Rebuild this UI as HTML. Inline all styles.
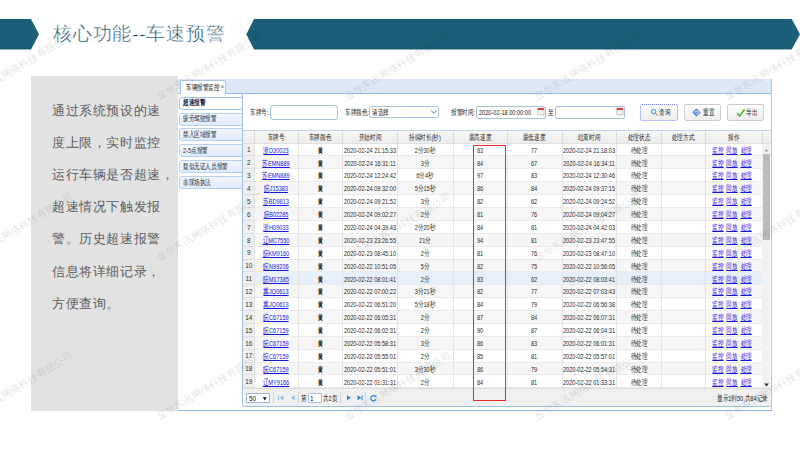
<!DOCTYPE html><html><head><meta charset="utf-8"><style>
*{margin:0;padding:0;box-sizing:border-box}
html,body{width:800px;height:450px;overflow:hidden;background:#fff}
body{position:relative;font-family:"Liberation Sans",sans-serif}
.a{position:absolute}
.t{position:absolute;white-space:nowrap;line-height:1}
.s{position:absolute;white-space:nowrap;font-size:7.5px;line-height:8px;height:8px;color:#2a2a2a;transform:scaleX(.7);transform-origin:0 0}
.s.c{text-align:center;transform-origin:50% 0}
.s b{font-weight:normal;font-size:8px}
.title{left:53px;top:25px;font-family:"Liberation Serif",serif;font-size:18.6px;letter-spacing:0.8px;color:#174f68;-webkit-text-stroke:0.4px #fff}
.gray{left:31px;top:76px;width:146.5px;height:335px;background:#e2e2e2}
.para{left:52px;font-family:"Liberation Serif",serif;font-size:12.5px;color:#5e5e5e;letter-spacing:0.6px;}
.ss{left:177.5px;top:79px;width:594px;height:331.5px;background:#fff}
.tabstrip{left:177.5px;top:79px;width:594px;height:15px;background:#dde8f8;border-bottom:1px solid #99bce8}
.tab{left:179.7px;top:80.3px;width:46px;height:13.7px;background:linear-gradient(#fff,#f7fafe);border:1px solid #a9c6ea;border-bottom:none;border-radius:2px 2px 0 0}
.menu{left:179px;width:64px;height:13px;border:1px solid #b9d0ee;border-radius:3px 0 0 3px;background:linear-gradient(#f3f7fd,#e0eaf8)}
.menu.sel{background:#fff;border-color:#9fc0ea}
.panel{left:242px;top:94px;width:529.5px;height:312.5px;border:1px solid #9cbfe8;border-top:none;border-radius:0 0 3px 3px}
.inp{border:1px solid #a9c0de;border-radius:2px;background:#fff}
.btn{border:1px solid #cdcdcd;border-radius:2px;background:linear-gradient(#fefefe,#eeeeee)}
.hd{top:130.4px;height:13.2px;background:linear-gradient(#f6f6f6,#ededed);border-top:1px solid #c3d6ef;border-bottom:1px solid #e0e0e0}
.row{left:243px;width:519.4px;height:12.88px;border-bottom:1px solid #ebebeb}
.vl{width:1px;background:#e4e4e4}
.lnk{color:#1515e0;text-decoration:underline;text-decoration-thickness:0.7px;text-underline-offset:0.5px}
.wm{font-size:10px;color:rgba(40,40,40,0.15);transform-origin:0 100%;transform:rotate(-31deg);letter-spacing:0.2px}
</style></head><body>
<svg class="a" style="left:0;top:0" width="800" height="450" viewBox="0 0 800 450"><polygon points="0,19 31,19 39,34.3 31,49.5 0,49.5" fill="#1a5e77"/><polygon points="246.4,34.3 254,19 791.7,19 800,34.3 791.7,49.5 254,49.5" fill="#1a5e77"/></svg>
<div class="t title">核心功能--车速预警</div>
<div class="a gray"></div>
<div class="t para" style="top:105.00px">通过系统预设的速</div>
<div class="t para" style="top:137.10px">度上限，实时监控</div>
<div class="t para" style="top:169.20px">运行车辆是否超速，</div>
<div class="t para" style="top:201.30px">超速情况下触发报</div>
<div class="t para" style="top:233.40px">警。历史超速报警</div>
<div class="t para" style="top:265.50px">信息将详细记录，</div>
<div class="t para" style="top:297.60px">方便查询。</div>
<div class="a ss"></div>
<div class="a tabstrip"></div>
<div class="a tab"></div>
<div class="s " style="left:186.00px;top:83.50px;color:#1a1a1a">车辆报警监控</div>
<div class="t" style="left:220.5px;top:83.6px;font-size:6.5px;color:#666">×</div>
<div class="a menu sel" style="top:96.60px"></div>
<div class="s " style="left:183.00px;top:99.20px;color:#1b2a44;font-weight:bold">超速报警</div>
<div class="a menu" style="top:112.50px"></div>
<div class="s " style="left:183.00px;top:115.10px;color:#262b33">疲劳驾驶报警</div>
<div class="a menu" style="top:128.40px"></div>
<div class="s " style="left:183.00px;top:131.00px;color:#262b33">禁入区域报警</div>
<div class="a menu" style="top:144.30px"></div>
<div class="s " style="left:183.00px;top:146.90px;color:#262b33"><b>2-5</b>点报警</div>
<div class="a menu" style="top:160.20px"></div>
<div class="s " style="left:183.00px;top:162.80px;color:#262b33">疑似无证人员报警</div>
<div class="a menu" style="top:176.10px"></div>
<div class="s " style="left:183.00px;top:178.70px;color:#262b33">非现场执法</div>
<div class="a panel"></div>
<div class="s " style="left:250.00px;top:108.50px;">车牌号<b>:</b></div>
<div class="a inp" style="left:270.2px;top:105px;width:67.7px;height:14.7px;border-radius:3px"></div>
<div class="s " style="left:344.50px;top:108.50px;">车牌颜色<b>:</b></div>
<div class="a inp" style="left:369.4px;top:106.3px;width:70px;height:12px"></div>
<div class="s " style="left:372.00px;top:108.50px;color:#111">请选择</div>
<svg class="a" style="left:430px;top:109px" width="8" height="6"><path d="M1.2 1.5 L4 4.3 L6.8 1.5" fill="none" stroke="#4a80c4" stroke-width="1"/></svg>
<div class="s " style="left:451.00px;top:108.50px;">报警时间<b>:</b></div>
<div class="a inp" style="left:476px;top:106px;width:70px;height:13px"></div>
<div class="s " style="left:478.50px;top:108.50px;color:#222"><b>2020-02-18 00:00:00</b></div>
<svg class="a" style="left:537px;top:107px" width="8" height="9"><rect x="0.8" y="1" width="6.2" height="7" fill="#f2f2f2" stroke="#b0b0b0" stroke-width="0.6"/><rect x="0.8" y="1" width="6.2" height="2" fill="#d9423a"/></svg>
<div class="s " style="left:548.00px;top:108.50px;color:#111">至</div>
<div class="a inp" style="left:554.5px;top:106px;width:70px;height:13px"></div>
<svg class="a" style="left:616px;top:107px" width="8" height="9"><rect x="0.8" y="1" width="6.2" height="7" fill="#f2f2f2" stroke="#b0b0b0" stroke-width="0.6"/><rect x="0.8" y="1" width="6.2" height="2" fill="#d9423a"/></svg>
<div class="a btn" style="left:640px;top:104.4px;width:38.4px;height:16.4px;border:1px dotted #7d86e8;"></div>
<div class="s " style="left:659.00px;top:109.00px;color:#222">查询</div>
<div class="a btn" style="left:684px;top:104.4px;width:37px;height:16.4px;"></div>
<div class="s " style="left:703.00px;top:109.00px;color:#222">重置</div>
<div class="a btn" style="left:727px;top:104.4px;width:37px;height:16.4px;"></div>
<div class="s " style="left:746.00px;top:109.00px;color:#222">导出</div>
<svg class="a" style="left:650px;top:108px" width="10" height="9"><circle cx="3.6" cy="3.6" r="2.3" fill="#d6e8fa" stroke="#3f86d3" stroke-width="0.9"/><line x1="5.3" y1="5.3" x2="7.6" y2="7.6" stroke="#e39b2d" stroke-width="1.4"/></svg>
<svg class="a" style="left:692px;top:107.8px" width="10" height="10"><path d="M4.5 0.8 L8.2 4.5 L4.5 8.2 L0.8 4.5Z" fill="#5696dc" stroke="#2f62a8" stroke-width="0.6"/><path d="M3 4.5 A1.6 1.6 0 1 1 4.5 6.1" fill="none" stroke="#fff" stroke-width="0.8"/></svg>
<svg class="a" style="left:735.5px;top:107.5px" width="10" height="10"><path d="M1 5.2 L3.6 8 L8.6 1.2" fill="none" stroke="#52b830" stroke-width="1.7"/></svg>
<div class="a hd" style="left:243px;width:527.5px"></div>
<div class="a vl" style="left:254.00px;top:130.4px;height:13.199999999999989px;background:#dadada"></div>
<div class="s c " style="left:176.15px;top:134.00px;width:200px;color:#1e1e1e">车牌号</div>
<div class="a vl" style="left:298.30px;top:130.4px;height:13.199999999999989px;background:#dadada"></div>
<div class="s c " style="left:220.35px;top:134.00px;width:200px;color:#1e1e1e">车牌颜色</div>
<div class="a vl" style="left:342.40px;top:130.4px;height:13.199999999999989px;background:#dadada"></div>
<div class="s c " style="left:269.70px;top:134.00px;width:200px;color:#1e1e1e">开始时间</div>
<div class="a vl" style="left:397.00px;top:130.4px;height:13.199999999999989px;background:#dadada"></div>
<div class="s c " style="left:324.75px;top:134.00px;width:200px;color:#1e1e1e">持续时长<b>(</b>秒<b>)</b></div>
<div class="a vl" style="left:452.50px;top:130.4px;height:13.199999999999989px;background:#dadada"></div>
<div class="s c " style="left:379.75px;top:134.00px;width:200px;color:#1e1e1e">最高速度</div>
<div class="a vl" style="left:507.00px;top:130.4px;height:13.199999999999989px;background:#dadada"></div>
<div class="s c " style="left:434.38px;top:134.00px;width:200px;color:#1e1e1e">最低速度</div>
<div class="a vl" style="left:561.75px;top:130.4px;height:13.199999999999989px;background:#dadada"></div>
<div class="s c " style="left:488.88px;top:134.00px;width:200px;color:#1e1e1e">结束时间</div>
<div class="a vl" style="left:616.00px;top:130.4px;height:13.199999999999989px;background:#dadada"></div>
<div class="s c " style="left:538.50px;top:134.00px;width:200px;color:#1e1e1e">处理状态</div>
<div class="a vl" style="left:661.00px;top:130.4px;height:13.199999999999989px;background:#dadada"></div>
<div class="s c " style="left:583.00px;top:134.00px;width:200px;color:#1e1e1e">处理方式</div>
<div class="a vl" style="left:705.00px;top:130.4px;height:13.199999999999989px;background:#dadada"></div>
<div class="s c " style="left:633.70px;top:134.00px;width:200px;color:#1e1e1e">操作</div>
<div class="a vl" style="left:762.4px;top:130.4px;height:13.199999999999989px;background:#dadada"></div>
<div class="a row" style="top:143.60px;background:#fff"></div>
<div class="a row" style="top:156.48px;background:#f6f6f6"></div>
<div class="a row" style="top:169.36px;background:#fff"></div>
<div class="a row" style="top:182.24px;background:#f6f6f6"></div>
<div class="a row" style="top:195.12px;background:#fff"></div>
<div class="a row" style="top:208.00px;background:#f6f6f6"></div>
<div class="a row" style="top:220.88px;background:#fff"></div>
<div class="a row" style="top:233.76px;background:#f6f6f6"></div>
<div class="a row" style="top:246.64px;background:#fff"></div>
<div class="a row" style="top:259.52px;background:#f6f6f6"></div>
<div class="a row" style="top:272.40px;background:#e7effb"></div>
<div class="a row" style="top:285.28px;background:#f6f6f6"></div>
<div class="a row" style="top:298.16px;background:#fff"></div>
<div class="a row" style="top:311.04px;background:#f6f6f6"></div>
<div class="a row" style="top:323.92px;background:#fff"></div>
<div class="a row" style="top:336.80px;background:#f6f6f6"></div>
<div class="a row" style="top:349.68px;background:#fff"></div>
<div class="a row" style="top:362.56px;background:#f6f6f6"></div>
<div class="a row" style="top:375.44px;background:#fff"></div>
<div class="a" style="left:243px;top:143.6px;width:11px;height:244.72px;background:#efefef"></div>
<div class="a" style="left:243px;top:155.48px;width:11.5px;height:1px;background:#e0e0e0"></div>
<div class="a" style="left:243px;top:168.36px;width:11.5px;height:1px;background:#e0e0e0"></div>
<div class="a" style="left:243px;top:181.24px;width:11.5px;height:1px;background:#e0e0e0"></div>
<div class="a" style="left:243px;top:194.12px;width:11.5px;height:1px;background:#e0e0e0"></div>
<div class="a" style="left:243px;top:207.00px;width:11.5px;height:1px;background:#e0e0e0"></div>
<div class="a" style="left:243px;top:219.88px;width:11.5px;height:1px;background:#e0e0e0"></div>
<div class="a" style="left:243px;top:232.76px;width:11.5px;height:1px;background:#e0e0e0"></div>
<div class="a" style="left:243px;top:245.64px;width:11.5px;height:1px;background:#e0e0e0"></div>
<div class="a" style="left:243px;top:258.52px;width:11.5px;height:1px;background:#e0e0e0"></div>
<div class="a" style="left:243px;top:271.40px;width:11.5px;height:1px;background:#e0e0e0"></div>
<div class="a" style="left:243px;top:284.28px;width:11.5px;height:1px;background:#e0e0e0"></div>
<div class="a" style="left:243px;top:297.16px;width:11.5px;height:1px;background:#e0e0e0"></div>
<div class="a" style="left:243px;top:310.04px;width:11.5px;height:1px;background:#e0e0e0"></div>
<div class="a" style="left:243px;top:322.92px;width:11.5px;height:1px;background:#e0e0e0"></div>
<div class="a" style="left:243px;top:335.80px;width:11.5px;height:1px;background:#e0e0e0"></div>
<div class="a" style="left:243px;top:348.68px;width:11.5px;height:1px;background:#e0e0e0"></div>
<div class="a" style="left:243px;top:361.56px;width:11.5px;height:1px;background:#e0e0e0"></div>
<div class="a" style="left:243px;top:374.44px;width:11.5px;height:1px;background:#e0e0e0"></div>
<div class="a" style="left:243px;top:387.32px;width:11.5px;height:1px;background:#e0e0e0"></div>
<div class="a vl" style="left:254.00px;top:143.6px;height:244.72px"></div>
<div class="a vl" style="left:298.30px;top:143.6px;height:244.72px"></div>
<div class="a vl" style="left:342.40px;top:143.6px;height:244.72px"></div>
<div class="a vl" style="left:397.00px;top:143.6px;height:244.72px"></div>
<div class="a vl" style="left:452.50px;top:143.6px;height:244.72px"></div>
<div class="a vl" style="left:507.00px;top:143.6px;height:244.72px"></div>
<div class="a vl" style="left:561.75px;top:143.6px;height:244.72px"></div>
<div class="a vl" style="left:616.00px;top:143.6px;height:244.72px"></div>
<div class="a vl" style="left:661.00px;top:143.6px;height:244.72px"></div>
<div class="a vl" style="left:705.00px;top:143.6px;height:244.72px"></div>
<div class="t" style="left:243.00px;width:11.5px;text-align:center;top:146.40px;font-size:7.6px;color:#333;transform:scaleX(.85)">1</div>
<div class="s c lnk" style="left:176.15px;top:146.70px;width:200px;">浙<b>D30023</b></div>
<div class="s c " style="left:220.35px;top:146.70px;width:200px;color:#2a2a2a;font-size:7px;font-weight:bold">黄</div>
<div class="s c " style="left:269.70px;top:146.70px;width:200px;"><b>2020-02-24 21:15:33</b></div>
<div class="s c " style="left:324.75px;top:146.70px;width:200px;"><b>2</b>分<b>30</b>秒</div>
<div class="s c " style="left:379.75px;top:146.70px;width:200px;"><b>83</b></div>
<div class="s c " style="left:434.38px;top:146.70px;width:200px;"><b>77</b></div>
<div class="s c " style="left:488.88px;top:146.70px;width:200px;"><b>2020-02-24 21:18:03</b></div>
<div class="s c " style="left:538.50px;top:146.70px;width:200px;">待处理</div>
<div class="s c" style="left:632.20px;top:146.70px;width:200px"><span class="lnk">监控</span>&nbsp;&nbsp;<span class="lnk">回放</span>&nbsp;&nbsp;<span class="lnk">处理</span></div>
<div class="t" style="left:243.00px;width:11.5px;text-align:center;top:159.28px;font-size:7.6px;color:#333;transform:scaleX(.85)">2</div>
<div class="s c lnk" style="left:176.15px;top:159.58px;width:200px;">苏<b>EMN889</b></div>
<div class="s c " style="left:220.35px;top:159.58px;width:200px;color:#2a2a2a;font-size:7px;font-weight:bold">黄</div>
<div class="s c " style="left:269.70px;top:159.58px;width:200px;"><b>2020-02-24 16:31:11</b></div>
<div class="s c " style="left:324.75px;top:159.58px;width:200px;"><b>3</b>分</div>
<div class="s c " style="left:379.75px;top:159.58px;width:200px;"><b>84</b></div>
<div class="s c " style="left:434.38px;top:159.58px;width:200px;"><b>67</b></div>
<div class="s c " style="left:488.88px;top:159.58px;width:200px;"><b>2020-02-24 16:34:11</b></div>
<div class="s c " style="left:538.50px;top:159.58px;width:200px;">待处理</div>
<div class="s c" style="left:632.20px;top:159.58px;width:200px"><span class="lnk">监控</span>&nbsp;&nbsp;<span class="lnk">回放</span>&nbsp;&nbsp;<span class="lnk">处理</span></div>
<div class="t" style="left:243.00px;width:11.5px;text-align:center;top:172.16px;font-size:7.6px;color:#333;transform:scaleX(.85)">3</div>
<div class="s c lnk" style="left:176.15px;top:172.46px;width:200px;">苏<b>EMN889</b></div>
<div class="s c " style="left:220.35px;top:172.46px;width:200px;color:#2a2a2a;font-size:7px;font-weight:bold">黄</div>
<div class="s c " style="left:269.70px;top:172.46px;width:200px;"><b>2020-02-24 12:24:42</b></div>
<div class="s c " style="left:324.75px;top:172.46px;width:200px;"><b>6</b>分<b>4</b>秒</div>
<div class="s c " style="left:379.75px;top:172.46px;width:200px;"><b>97</b></div>
<div class="s c " style="left:434.38px;top:172.46px;width:200px;"><b>83</b></div>
<div class="s c " style="left:488.88px;top:172.46px;width:200px;"><b>2020-02-24 12:30:46</b></div>
<div class="s c " style="left:538.50px;top:172.46px;width:200px;">待处理</div>
<div class="s c" style="left:632.20px;top:172.46px;width:200px"><span class="lnk">监控</span>&nbsp;&nbsp;<span class="lnk">回放</span>&nbsp;&nbsp;<span class="lnk">处理</span></div>
<div class="t" style="left:243.00px;width:11.5px;text-align:center;top:185.04px;font-size:7.6px;color:#333;transform:scaleX(.85)">4</div>
<div class="s c lnk" style="left:176.15px;top:185.34px;width:200px;">皖<b>J15383</b></div>
<div class="s c " style="left:220.35px;top:185.34px;width:200px;color:#2a2a2a;font-size:7px;font-weight:bold">黄</div>
<div class="s c " style="left:269.70px;top:185.34px;width:200px;"><b>2020-02-24 09:32:00</b></div>
<div class="s c " style="left:324.75px;top:185.34px;width:200px;"><b>5</b>分<b>15</b>秒</div>
<div class="s c " style="left:379.75px;top:185.34px;width:200px;"><b>86</b></div>
<div class="s c " style="left:434.38px;top:185.34px;width:200px;"><b>84</b></div>
<div class="s c " style="left:488.88px;top:185.34px;width:200px;"><b>2020-02-24 09:37:15</b></div>
<div class="s c " style="left:538.50px;top:185.34px;width:200px;">待处理</div>
<div class="s c" style="left:632.20px;top:185.34px;width:200px"><span class="lnk">监控</span>&nbsp;&nbsp;<span class="lnk">回放</span>&nbsp;&nbsp;<span class="lnk">处理</span></div>
<div class="t" style="left:243.00px;width:11.5px;text-align:center;top:197.92px;font-size:7.6px;color:#333;transform:scaleX(.85)">5</div>
<div class="s c lnk" style="left:176.15px;top:198.22px;width:200px;">苏<b>BD9813</b></div>
<div class="s c " style="left:220.35px;top:198.22px;width:200px;color:#2a2a2a;font-size:7px;font-weight:bold">黄</div>
<div class="s c " style="left:269.70px;top:198.22px;width:200px;"><b>2020-02-24 09:21:52</b></div>
<div class="s c " style="left:324.75px;top:198.22px;width:200px;"><b>3</b>分</div>
<div class="s c " style="left:379.75px;top:198.22px;width:200px;"><b>82</b></div>
<div class="s c " style="left:434.38px;top:198.22px;width:200px;"><b>62</b></div>
<div class="s c " style="left:488.88px;top:198.22px;width:200px;"><b>2020-02-24 09:24:52</b></div>
<div class="s c " style="left:538.50px;top:198.22px;width:200px;">待处理</div>
<div class="s c" style="left:632.20px;top:198.22px;width:200px"><span class="lnk">监控</span>&nbsp;&nbsp;<span class="lnk">回放</span>&nbsp;&nbsp;<span class="lnk">处理</span></div>
<div class="t" style="left:243.00px;width:11.5px;text-align:center;top:210.80px;font-size:7.6px;color:#333;transform:scaleX(.85)">6</div>
<div class="s c lnk" style="left:176.15px;top:211.10px;width:200px;">皖<b>B02285</b></div>
<div class="s c " style="left:220.35px;top:211.10px;width:200px;color:#2a2a2a;font-size:7px;font-weight:bold">黄</div>
<div class="s c " style="left:269.70px;top:211.10px;width:200px;"><b>2020-02-24 09:02:27</b></div>
<div class="s c " style="left:324.75px;top:211.10px;width:200px;"><b>2</b>分</div>
<div class="s c " style="left:379.75px;top:211.10px;width:200px;"><b>81</b></div>
<div class="s c " style="left:434.38px;top:211.10px;width:200px;"><b>76</b></div>
<div class="s c " style="left:488.88px;top:211.10px;width:200px;"><b>2020-02-24 09:04:27</b></div>
<div class="s c " style="left:538.50px;top:211.10px;width:200px;">待处理</div>
<div class="s c" style="left:632.20px;top:211.10px;width:200px"><span class="lnk">监控</span>&nbsp;&nbsp;<span class="lnk">回放</span>&nbsp;&nbsp;<span class="lnk">处理</span></div>
<div class="t" style="left:243.00px;width:11.5px;text-align:center;top:223.68px;font-size:7.6px;color:#333;transform:scaleX(.85)">7</div>
<div class="s c lnk" style="left:176.15px;top:223.98px;width:200px;">浙<b>H09033</b></div>
<div class="s c " style="left:220.35px;top:223.98px;width:200px;color:#2a2a2a;font-size:7px;font-weight:bold">黄</div>
<div class="s c " style="left:269.70px;top:223.98px;width:200px;"><b>2020-02-24 04:39:43</b></div>
<div class="s c " style="left:324.75px;top:223.98px;width:200px;"><b>2</b>分<b>20</b>秒</div>
<div class="s c " style="left:379.75px;top:223.98px;width:200px;"><b>84</b></div>
<div class="s c " style="left:434.38px;top:223.98px;width:200px;"><b>81</b></div>
<div class="s c " style="left:488.88px;top:223.98px;width:200px;"><b>2020-02-24 04:42:03</b></div>
<div class="s c " style="left:538.50px;top:223.98px;width:200px;">待处理</div>
<div class="s c" style="left:632.20px;top:223.98px;width:200px"><span class="lnk">监控</span>&nbsp;&nbsp;<span class="lnk">回放</span>&nbsp;&nbsp;<span class="lnk">处理</span></div>
<div class="t" style="left:243.00px;width:11.5px;text-align:center;top:236.56px;font-size:7.6px;color:#333;transform:scaleX(.85)">8</div>
<div class="s c lnk" style="left:176.15px;top:236.86px;width:200px;">辽<b>MC7550</b></div>
<div class="s c " style="left:220.35px;top:236.86px;width:200px;color:#2a2a2a;font-size:7px;font-weight:bold">黄</div>
<div class="s c " style="left:269.70px;top:236.86px;width:200px;"><b>2020-02-23 23:26:55</b></div>
<div class="s c " style="left:324.75px;top:236.86px;width:200px;"><b>21</b>分</div>
<div class="s c " style="left:379.75px;top:236.86px;width:200px;"><b>94</b></div>
<div class="s c " style="left:434.38px;top:236.86px;width:200px;"><b>81</b></div>
<div class="s c " style="left:488.88px;top:236.86px;width:200px;"><b>2020-02-23 23:47:55</b></div>
<div class="s c " style="left:538.50px;top:236.86px;width:200px;">待处理</div>
<div class="s c" style="left:632.20px;top:236.86px;width:200px"><span class="lnk">监控</span>&nbsp;&nbsp;<span class="lnk">回放</span>&nbsp;&nbsp;<span class="lnk">处理</span></div>
<div class="t" style="left:243.00px;width:11.5px;text-align:center;top:249.44px;font-size:7.6px;color:#333;transform:scaleX(.85)">9</div>
<div class="s c lnk" style="left:176.15px;top:249.74px;width:200px;">皖<b>KM9160</b></div>
<div class="s c " style="left:220.35px;top:249.74px;width:200px;color:#2a2a2a;font-size:7px;font-weight:bold">黄</div>
<div class="s c " style="left:269.70px;top:249.74px;width:200px;"><b>2020-02-23 08:45:10</b></div>
<div class="s c " style="left:324.75px;top:249.74px;width:200px;"><b>2</b>分</div>
<div class="s c " style="left:379.75px;top:249.74px;width:200px;"><b>81</b></div>
<div class="s c " style="left:434.38px;top:249.74px;width:200px;"><b>76</b></div>
<div class="s c " style="left:488.88px;top:249.74px;width:200px;"><b>2020-02-23 08:47:10</b></div>
<div class="s c " style="left:538.50px;top:249.74px;width:200px;">待处理</div>
<div class="s c" style="left:632.20px;top:249.74px;width:200px"><span class="lnk">监控</span>&nbsp;&nbsp;<span class="lnk">回放</span>&nbsp;&nbsp;<span class="lnk">处理</span></div>
<div class="t" style="left:243.00px;width:11.5px;text-align:center;top:262.32px;font-size:7.6px;color:#333;transform:scaleX(.85)">10</div>
<div class="s c lnk" style="left:176.15px;top:262.62px;width:200px;">皖<b>N99206</b></div>
<div class="s c " style="left:220.35px;top:262.62px;width:200px;color:#2a2a2a;font-size:7px;font-weight:bold">黄</div>
<div class="s c " style="left:269.70px;top:262.62px;width:200px;"><b>2020-02-22 10:51:05</b></div>
<div class="s c " style="left:324.75px;top:262.62px;width:200px;"><b>5</b>分</div>
<div class="s c " style="left:379.75px;top:262.62px;width:200px;"><b>82</b></div>
<div class="s c " style="left:434.38px;top:262.62px;width:200px;"><b>75</b></div>
<div class="s c " style="left:488.88px;top:262.62px;width:200px;"><b>2020-02-22 10:56:05</b></div>
<div class="s c " style="left:538.50px;top:262.62px;width:200px;">待处理</div>
<div class="s c" style="left:632.20px;top:262.62px;width:200px"><span class="lnk">监控</span>&nbsp;&nbsp;<span class="lnk">回放</span>&nbsp;&nbsp;<span class="lnk">处理</span></div>
<div class="t" style="left:243.00px;width:11.5px;text-align:center;top:275.20px;font-size:7.6px;color:#333;transform:scaleX(.85)">11</div>
<div class="s c lnk" style="left:176.15px;top:275.50px;width:200px;">皖<b>M17385</b></div>
<div class="s c " style="left:220.35px;top:275.50px;width:200px;color:#2a2a2a;font-size:7px;font-weight:bold">黄</div>
<div class="s c " style="left:269.70px;top:275.50px;width:200px;"><b>2020-02-22 08:01:41</b></div>
<div class="s c " style="left:324.75px;top:275.50px;width:200px;"><b>2</b>分</div>
<div class="s c " style="left:379.75px;top:275.50px;width:200px;"><b>83</b></div>
<div class="s c " style="left:434.38px;top:275.50px;width:200px;"><b>62</b></div>
<div class="s c " style="left:488.88px;top:275.50px;width:200px;"><b>2020-02-22 08:03:41</b></div>
<div class="s c " style="left:538.50px;top:275.50px;width:200px;">待处理</div>
<div class="s c" style="left:632.20px;top:275.50px;width:200px"><span class="lnk">监控</span>&nbsp;&nbsp;<span class="lnk">回放</span>&nbsp;&nbsp;<span class="lnk">处理</span></div>
<div class="t" style="left:243.00px;width:11.5px;text-align:center;top:288.08px;font-size:7.6px;color:#333;transform:scaleX(.85)">12</div>
<div class="s c lnk" style="left:176.15px;top:288.38px;width:200px;">冀<b>JQ0613</b></div>
<div class="s c " style="left:220.35px;top:288.38px;width:200px;color:#2a2a2a;font-size:7px;font-weight:bold">黄</div>
<div class="s c " style="left:269.70px;top:288.38px;width:200px;"><b>2020-02-22 07:00:22</b></div>
<div class="s c " style="left:324.75px;top:288.38px;width:200px;"><b>3</b>分<b>21</b>秒</div>
<div class="s c " style="left:379.75px;top:288.38px;width:200px;"><b>82</b></div>
<div class="s c " style="left:434.38px;top:288.38px;width:200px;"><b>77</b></div>
<div class="s c " style="left:488.88px;top:288.38px;width:200px;"><b>2020-02-22 07:03:43</b></div>
<div class="s c " style="left:538.50px;top:288.38px;width:200px;">待处理</div>
<div class="s c" style="left:632.20px;top:288.38px;width:200px"><span class="lnk">监控</span>&nbsp;&nbsp;<span class="lnk">回放</span>&nbsp;&nbsp;<span class="lnk">处理</span></div>
<div class="t" style="left:243.00px;width:11.5px;text-align:center;top:300.96px;font-size:7.6px;color:#333;transform:scaleX(.85)">13</div>
<div class="s c lnk" style="left:176.15px;top:301.26px;width:200px;">冀<b>JQ0613</b></div>
<div class="s c " style="left:220.35px;top:301.26px;width:200px;color:#2a2a2a;font-size:7px;font-weight:bold">黄</div>
<div class="s c " style="left:269.70px;top:301.26px;width:200px;"><b>2020-02-22 06:51:20</b></div>
<div class="s c " style="left:324.75px;top:301.26px;width:200px;"><b>5</b>分<b>18</b>秒</div>
<div class="s c " style="left:379.75px;top:301.26px;width:200px;"><b>84</b></div>
<div class="s c " style="left:434.38px;top:301.26px;width:200px;"><b>79</b></div>
<div class="s c " style="left:488.88px;top:301.26px;width:200px;"><b>2020-02-22 06:56:38</b></div>
<div class="s c " style="left:538.50px;top:301.26px;width:200px;">待处理</div>
<div class="s c" style="left:632.20px;top:301.26px;width:200px"><span class="lnk">监控</span>&nbsp;&nbsp;<span class="lnk">回放</span>&nbsp;&nbsp;<span class="lnk">处理</span></div>
<div class="t" style="left:243.00px;width:11.5px;text-align:center;top:313.84px;font-size:7.6px;color:#333;transform:scaleX(.85)">14</div>
<div class="s c lnk" style="left:176.15px;top:314.14px;width:200px;">皖<b>C67159</b></div>
<div class="s c " style="left:220.35px;top:314.14px;width:200px;color:#2a2a2a;font-size:7px;font-weight:bold">黄</div>
<div class="s c " style="left:269.70px;top:314.14px;width:200px;"><b>2020-02-22 06:05:31</b></div>
<div class="s c " style="left:324.75px;top:314.14px;width:200px;"><b>2</b>分</div>
<div class="s c " style="left:379.75px;top:314.14px;width:200px;"><b>87</b></div>
<div class="s c " style="left:434.38px;top:314.14px;width:200px;"><b>84</b></div>
<div class="s c " style="left:488.88px;top:314.14px;width:200px;"><b>2020-02-22 06:07:31</b></div>
<div class="s c " style="left:538.50px;top:314.14px;width:200px;">待处理</div>
<div class="s c" style="left:632.20px;top:314.14px;width:200px"><span class="lnk">监控</span>&nbsp;&nbsp;<span class="lnk">回放</span>&nbsp;&nbsp;<span class="lnk">处理</span></div>
<div class="t" style="left:243.00px;width:11.5px;text-align:center;top:326.72px;font-size:7.6px;color:#333;transform:scaleX(.85)">15</div>
<div class="s c lnk" style="left:176.15px;top:327.02px;width:200px;">皖<b>C67159</b></div>
<div class="s c " style="left:220.35px;top:327.02px;width:200px;color:#2a2a2a;font-size:7px;font-weight:bold">黄</div>
<div class="s c " style="left:269.70px;top:327.02px;width:200px;"><b>2020-02-22 06:02:31</b></div>
<div class="s c " style="left:324.75px;top:327.02px;width:200px;"><b>2</b>分</div>
<div class="s c " style="left:379.75px;top:327.02px;width:200px;"><b>90</b></div>
<div class="s c " style="left:434.38px;top:327.02px;width:200px;"><b>87</b></div>
<div class="s c " style="left:488.88px;top:327.02px;width:200px;"><b>2020-02-22 06:04:31</b></div>
<div class="s c " style="left:538.50px;top:327.02px;width:200px;">待处理</div>
<div class="s c" style="left:632.20px;top:327.02px;width:200px"><span class="lnk">监控</span>&nbsp;&nbsp;<span class="lnk">回放</span>&nbsp;&nbsp;<span class="lnk">处理</span></div>
<div class="t" style="left:243.00px;width:11.5px;text-align:center;top:339.60px;font-size:7.6px;color:#333;transform:scaleX(.85)">16</div>
<div class="s c lnk" style="left:176.15px;top:339.90px;width:200px;">皖<b>C67159</b></div>
<div class="s c " style="left:220.35px;top:339.90px;width:200px;color:#2a2a2a;font-size:7px;font-weight:bold">黄</div>
<div class="s c " style="left:269.70px;top:339.90px;width:200px;"><b>2020-02-22 05:58:31</b></div>
<div class="s c " style="left:324.75px;top:339.90px;width:200px;"><b>3</b>分</div>
<div class="s c " style="left:379.75px;top:339.90px;width:200px;"><b>86</b></div>
<div class="s c " style="left:434.38px;top:339.90px;width:200px;"><b>83</b></div>
<div class="s c " style="left:488.88px;top:339.90px;width:200px;"><b>2020-02-22 06:01:31</b></div>
<div class="s c " style="left:538.50px;top:339.90px;width:200px;">待处理</div>
<div class="s c" style="left:632.20px;top:339.90px;width:200px"><span class="lnk">监控</span>&nbsp;&nbsp;<span class="lnk">回放</span>&nbsp;&nbsp;<span class="lnk">处理</span></div>
<div class="t" style="left:243.00px;width:11.5px;text-align:center;top:352.48px;font-size:7.6px;color:#333;transform:scaleX(.85)">17</div>
<div class="s c lnk" style="left:176.15px;top:352.78px;width:200px;">皖<b>C67159</b></div>
<div class="s c " style="left:220.35px;top:352.78px;width:200px;color:#2a2a2a;font-size:7px;font-weight:bold">黄</div>
<div class="s c " style="left:269.70px;top:352.78px;width:200px;"><b>2020-02-22 05:55:01</b></div>
<div class="s c " style="left:324.75px;top:352.78px;width:200px;"><b>2</b>分</div>
<div class="s c " style="left:379.75px;top:352.78px;width:200px;"><b>85</b></div>
<div class="s c " style="left:434.38px;top:352.78px;width:200px;"><b>81</b></div>
<div class="s c " style="left:488.88px;top:352.78px;width:200px;"><b>2020-02-22 05:57:01</b></div>
<div class="s c " style="left:538.50px;top:352.78px;width:200px;">待处理</div>
<div class="s c" style="left:632.20px;top:352.78px;width:200px"><span class="lnk">监控</span>&nbsp;&nbsp;<span class="lnk">回放</span>&nbsp;&nbsp;<span class="lnk">处理</span></div>
<div class="t" style="left:243.00px;width:11.5px;text-align:center;top:365.36px;font-size:7.6px;color:#333;transform:scaleX(.85)">18</div>
<div class="s c lnk" style="left:176.15px;top:365.66px;width:200px;">皖<b>C67159</b></div>
<div class="s c " style="left:220.35px;top:365.66px;width:200px;color:#2a2a2a;font-size:7px;font-weight:bold">黄</div>
<div class="s c " style="left:269.70px;top:365.66px;width:200px;"><b>2020-02-22 05:51:01</b></div>
<div class="s c " style="left:324.75px;top:365.66px;width:200px;"><b>3</b>分<b>30</b>秒</div>
<div class="s c " style="left:379.75px;top:365.66px;width:200px;"><b>86</b></div>
<div class="s c " style="left:434.38px;top:365.66px;width:200px;"><b>79</b></div>
<div class="s c " style="left:488.88px;top:365.66px;width:200px;"><b>2020-02-22 05:54:31</b></div>
<div class="s c " style="left:538.50px;top:365.66px;width:200px;">待处理</div>
<div class="s c" style="left:632.20px;top:365.66px;width:200px"><span class="lnk">监控</span>&nbsp;&nbsp;<span class="lnk">回放</span>&nbsp;&nbsp;<span class="lnk">处理</span></div>
<div class="t" style="left:243.00px;width:11.5px;text-align:center;top:378.24px;font-size:7.6px;color:#333;transform:scaleX(.85)">19</div>
<div class="s c lnk" style="left:176.15px;top:378.54px;width:200px;">辽<b>MY9166</b></div>
<div class="s c " style="left:220.35px;top:378.54px;width:200px;color:#2a2a2a;font-size:7px;font-weight:bold">黄</div>
<div class="s c " style="left:269.70px;top:378.54px;width:200px;"><b>2020-02-22 01:31:31</b></div>
<div class="s c " style="left:324.75px;top:378.54px;width:200px;"><b>2</b>分</div>
<div class="s c " style="left:379.75px;top:378.54px;width:200px;"><b>84</b></div>
<div class="s c " style="left:434.38px;top:378.54px;width:200px;"><b>81</b></div>
<div class="s c " style="left:488.88px;top:378.54px;width:200px;"><b>2020-02-22 01:33:31</b></div>
<div class="s c " style="left:538.50px;top:378.54px;width:200px;">待处理</div>
<div class="s c" style="left:632.20px;top:378.54px;width:200px"><span class="lnk">监控</span>&nbsp;&nbsp;<span class="lnk">回放</span>&nbsp;&nbsp;<span class="lnk">处理</span></div>
<div class="a" style="left:762.4px;top:143.6px;width:7.8px;height:244.72px;background:#f1f1f1"></div>
<div class="a" style="left:762.6px;top:154px;width:7.4px;height:86px;background:#bcbcbc"></div>
<svg class="a" style="left:763px;top:147px" width="7" height="6"><path d="M1.5 4.5 L3.5 2 L5.5 4.5Z" fill="#a0a0a0"/></svg>
<svg class="a" style="left:763px;top:382px" width="7" height="6"><path d="M1.2 1.5 L3.5 4.5 L5.8 1.5Z" fill="#333"/></svg>
<div class="a" style="left:243.5px;top:388.32px;width:527px;height:17.68px;background:#f0f0f0;border-top:1px solid #dcdcdc"></div>
<div class="a inp" style="left:246px;top:393px;width:23.6px;height:10.4px;border-color:#a8b4c4;border-radius:1px"></div>
<div class="t" style="left:248.5px;top:394.6px;font-size:8px;color:#111;transform:scaleX(.8);transform-origin:0 0">50</div>
<svg class="a" style="left:262px;top:395.5px" width="6" height="6"><path d="M0.8 1.2 L4.7 1.2 L2.75 4.6Z" fill="#111"/></svg>
<div class="a" style="left:272.6px;top:392px;width:1px;height:11px;background:#d4d4d4"></div>
<div class="a" style="left:298px;top:392px;width:1px;height:11px;background:#d4d4d4"></div>
<div class="a" style="left:340px;top:392px;width:1px;height:11px;background:#d4d4d4"></div>
<div class="a" style="left:365px;top:392px;width:1px;height:11px;background:#d4d4d4"></div>
<svg class="a" style="left:277px;top:394px" width="8" height="8"><rect x="1" y="1.3" width="1" height="5" fill="#8cc2ec"/><path d="M6.5 1.3 L2.6 3.8 L6.5 6.3Z" fill="#8cc2ec"/></svg>
<svg class="a" style="left:289px;top:394px" width="8" height="8"><path d="M5.5 1.3 L1.8 3.8 L5.5 6.3Z" fill="#8cc2ec"/></svg>
<div class="s " style="left:301.00px;top:394.80px;color:#222">第</div>
<div class="a inp" style="left:308px;top:393px;width:14px;height:10.4px;border-radius:1px"></div>
<div class="t" style="left:309.5px;top:394.6px;font-size:8px;color:#111;transform:scaleX(.8);transform-origin:0 0">1</div>
<div class="s " style="left:323.00px;top:394.80px;color:#222">共<b>2</b>页</div>
<svg class="a" style="left:345px;top:394px" width="8" height="8"><path d="M2 1.3 L5.8 3.8 L2 6.3Z" fill="#1c86dd"/></svg>
<svg class="a" style="left:356px;top:394px" width="8" height="8"><path d="M1.5 1.3 L5.3 3.8 L1.5 6.3Z" fill="#1c86dd"/><rect x="5.6" y="1.3" width="1" height="5" fill="#1c86dd"/></svg>
<svg class="a" style="left:368.5px;top:393.5px" width="9" height="9"><path d="M6.6 3 A2.6 2.6 0 1 0 6.8 5.2" fill="none" stroke="#1c86dd" stroke-width="1.2"/><path d="M5.2 1.6 L7.4 1.4 L7.2 3.8Z" fill="#1c86dd"/></svg>
<div class="s " style="left:717.00px;top:394.80px;color:#222">显示<b>1</b>到<b>50,</b>共<b>84</b>记录</div>
<div class="a" style="left:177.5px;top:410px;width:594px;height:1px;background:#8fb4e5"></div>
<div class="a" style="left:770.5px;top:79px;width:1px;height:332px;background:#a9c6ec"></div>
<div class="a" style="left:472.5px;top:145.3px;width:33.8px;height:255.7px;border:1.6px solid #ec2a2c"></div>
<div class="t wm" style="left:-30px;top:92px">金华东讯网络科技有限公司</div>
<div class="t wm" style="left:160px;top:92px">金华东讯网络科技有限公司</div>
<div class="t wm" style="left:348px;top:92px">金华东讯网络科技有限公司</div>
<div class="t wm" style="left:538px;top:92px">金华东讯网络科技有限公司</div>
<div class="t wm" style="left:728px;top:92px">金华东讯网络科技有限公司</div>
<div class="t wm" style="left:-30px;top:253px">金华东讯网络科技有限公司</div>
<div class="t wm" style="left:160px;top:253px">金华东讯网络科技有限公司</div>
<div class="t wm" style="left:348px;top:253px">金华东讯网络科技有限公司</div>
<div class="t wm" style="left:538px;top:253px">金华东讯网络科技有限公司</div>
<div class="t wm" style="left:728px;top:253px">金华东讯网络科技有限公司</div>
<div class="t wm" style="left:-30px;top:412px">金华东讯网络科技有限公司</div>
<div class="t wm" style="left:160px;top:412px">金华东讯网络科技有限公司</div>
<div class="t wm" style="left:348px;top:412px">金华东讯网络科技有限公司</div>
<div class="t wm" style="left:538px;top:412px">金华东讯网络科技有限公司</div>
<div class="t wm" style="left:728px;top:412px">金华东讯网络科技有限公司</div>
</body></html>
